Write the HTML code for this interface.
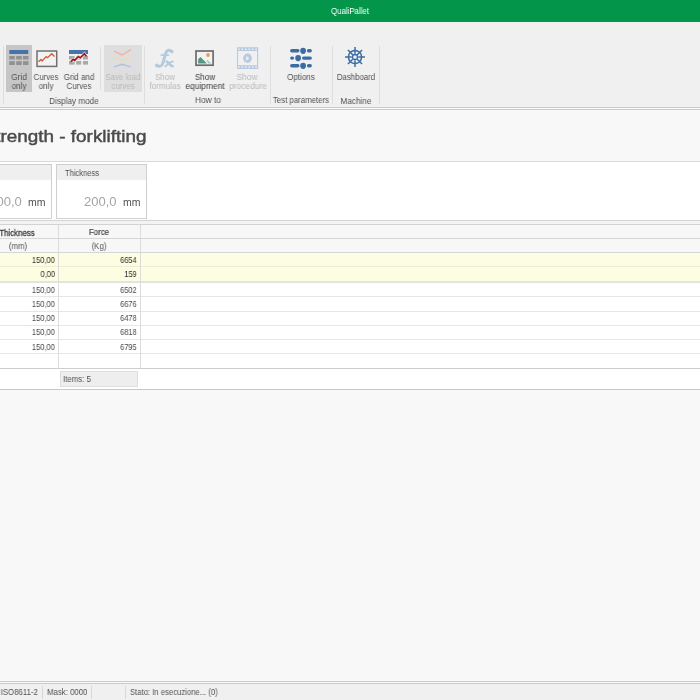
<!DOCTYPE html>
<html><head><meta charset="utf-8"><style>
html,body{margin:0;padding:0;width:700px;height:700px;overflow:hidden;background:#f7f7f7;}
body{position:relative;font-family:"Liberation Sans", sans-serif;}
body>div{position:absolute;will-change:transform;}
</style></head><body>
<div style="left:0px;top:0px;width:700px;height:22px;background:#03964b;"></div>
<div style="top:6.84px;font-size:8.8px;color:#ffffff;font-weight:400;line-height:9.830px;white-space:nowrap;left:150px;width:400px;text-align:center;transform:scaleX(0.89);transform-origin:center 50%;">QualiPallet</div>
<div style="left:0px;top:22px;width:700px;height:85px;background:#f0f0f0;"></div>
<div style="left:0px;top:107px;width:700px;height:1px;background:#c9c9c9;"></div>
<div style="left:0px;top:108px;width:700px;height:1px;background:#fbfbfb;"></div>
<div style="left:0px;top:109px;width:700px;height:1px;background:#c9c9c9;"></div>
<div style="left:3px;top:46px;width:1px;height:58px;background:#dedede;"></div>
<div style="left:144px;top:46px;width:1px;height:58px;background:#dedede;"></div>
<div style="left:270px;top:46px;width:1px;height:58px;background:#dedede;"></div>
<div style="left:332px;top:46px;width:1px;height:58px;background:#dedede;"></div>
<div style="left:379px;top:46px;width:1px;height:58px;background:#dedede;"></div>
<div style="left:100px;top:47px;width:1px;height:43px;background:#dedede;"></div>
<div style="left:6px;top:45px;width:26px;height:47px;background:#c6c6c6;"></div>
<svg style="position:absolute;left:6px;top:45px" width="26" height="30" viewBox="0 0 26 30"><rect x="3.3" y="5" width="19" height="4" fill="#4573aa"/><rect x="3.3" y="11" width="5.5" height="3.5" fill="#919191"/><rect x="10.2" y="11" width="5.5" height="3.5" fill="#919191"/><rect x="17" y="11" width="5.5" height="3.5" fill="#919191"/><rect x="3.3" y="16.2" width="5.5" height="3.8" fill="#919191"/><rect x="10.2" y="16.2" width="5.5" height="3.8" fill="#919191"/><rect x="17" y="16.2" width="5.5" height="3.8" fill="#919191"/></svg>
<div style="top:72.64px;font-size:8.8px;color:#505050;font-weight:400;line-height:9.830px;white-space:nowrap;left:-181px;width:400px;text-align:center;transform:scaleX(0.94);transform-origin:center 50%;">Grid</div>
<div style="top:82.04px;font-size:8.8px;color:#505050;font-weight:400;line-height:9.830px;white-space:nowrap;left:-181px;width:400px;text-align:center;transform:scaleX(0.92);transform-origin:center 50%;">only</div>
<svg style="position:absolute;left:30px;top:44px" width="32" height="26" viewBox="0 0 32 26"><rect x="7" y="7" width="19.7" height="15.4" fill="#f2f2f2" stroke="#707070" stroke-width="1.5"/><polyline points="8.5,17.8 11,15.5 12.1,16.9 16.2,12.6 17.6,13.7 21.7,9.8 24.5,12.6" fill="none" stroke="#d35a36" stroke-width="1.35"/></svg>
<div style="top:72.64px;font-size:8.8px;color:#505050;font-weight:400;line-height:9.830px;white-space:nowrap;left:-153.6px;width:400px;text-align:center;transform:scaleX(0.89);transform-origin:center 50%;">Curves</div>
<div style="top:82.04px;font-size:8.8px;color:#505050;font-weight:400;line-height:9.830px;white-space:nowrap;left:-153.6px;width:400px;text-align:center;transform:scaleX(0.92);transform-origin:center 50%;">only</div>
<svg style="position:absolute;left:64px;top:46px" width="30" height="24" viewBox="0 0 30 24"><rect x="5" y="4" width="19" height="4" fill="#4573aa"/><rect x="5" y="10" width="5.6" height="3.5" fill="#a9a9a9"/><rect x="12.2" y="10" width="5" height="3.5" fill="#a9a9a9"/><rect x="19" y="10" width="5" height="3.5" fill="#a9a9a9"/><rect x="5" y="15" width="5.6" height="3.6" fill="#a9a9a9"/><rect x="12.2" y="15" width="5" height="3.6" fill="#a9a9a9"/><rect x="19" y="15" width="5" height="3.6" fill="#a9a9a9"/><polyline points="6.9,15.9 9.2,13.3 10.7,14.4 14.4,10.5 16.3,11.8 20.4,7.7 22.5,10.5" fill="none" stroke="#e4e4e4" stroke-width="2.8"/><polyline points="6.9,15.9 9.2,13.3 10.7,14.4 14.4,10.5 16.3,11.8 20.4,7.7 22.5,10.5" fill="none" stroke="#9e1414" stroke-width="1.6"/></svg>
<div style="top:72.64px;font-size:8.8px;color:#505050;font-weight:400;line-height:9.830px;white-space:nowrap;left:-121.3px;width:400px;text-align:center;transform:scaleX(0.91);transform-origin:center 50%;">Grid and</div>
<div style="top:82.04px;font-size:8.8px;color:#505050;font-weight:400;line-height:9.830px;white-space:nowrap;left:-121.3px;width:400px;text-align:center;transform:scaleX(0.89);transform-origin:center 50%;">Curves</div>
<div style="top:96.64px;font-size:8.8px;color:#505050;font-weight:400;line-height:9.830px;white-space:nowrap;left:-125.8px;width:400px;text-align:center;transform:scaleX(0.93);transform-origin:center 50%;">Display mode</div>
<div style="left:104px;top:45px;width:38px;height:47px;background:#dedede;"></div>
<svg style="position:absolute;left:104px;top:42px" width="38" height="30" viewBox="0 0 38 30"><polyline points="10,9.1 18,12.9 27,7.6" fill="none" stroke="#efb4a4" stroke-width="1.3"/><polyline points="10,15.9 18,18.2 27,15.9" fill="none" stroke="#f4d6ad" stroke-width="1.3"/><polyline points="10,25 18,22.3 27,25" fill="none" stroke="#a9c0dc" stroke-width="1.3"/></svg>
<div style="top:72.84px;font-size:8.8px;color:#b9b9b9;font-weight:400;line-height:9.830px;white-space:nowrap;left:-77px;width:400px;text-align:center;transform:scaleX(0.89);transform-origin:center 50%;">Save load</div>
<div style="top:81.74px;font-size:8.8px;color:#b9b9b9;font-weight:400;line-height:9.830px;white-space:nowrap;left:-77px;width:400px;text-align:center;transform:scaleX(0.89);transform-origin:center 50%;">curves</div>
<svg style="position:absolute;left:148px;top:44px" width="32" height="28" viewBox="0 0 32 28"><g fill="none" stroke="#b5c9de" stroke-linecap="round"><path d="M23.6,7.4 C22,5.6 18.8,5.6 17.8,9 L14.6,19.8 C13.8,22.4 10.8,23 8.6,21.6" stroke-width="2.9"/><path d="M13.4,11.1 L20.2,11.1" stroke-width="1.9"/><path d="M17.4,22.4 C19.5,20.2 22.5,17.6 24.9,17.6" stroke-width="1.9"/><path d="M18.6,17.6 C20,18 21.5,21.5 24.6,22.3" stroke-width="2.6"/></g><circle cx="23.7" cy="7.6" r="1.8" fill="#b5c9de"/><circle cx="9" cy="21.4" r="1.8" fill="#b5c9de"/></svg>
<div style="top:72.84px;font-size:8.8px;color:#b9b9b9;font-weight:400;line-height:9.830px;white-space:nowrap;left:-35.30000000000001px;width:400px;text-align:center;transform:scaleX(0.91);transform-origin:center 50%;">Show</div>
<div style="top:82.44px;font-size:8.8px;color:#b9b9b9;font-weight:400;line-height:9.830px;white-space:nowrap;left:-35.19999999999999px;width:400px;text-align:center;transform:scaleX(0.93);transform-origin:center 50%;">formulas</div>
<svg style="position:absolute;left:194px;top:49px" width="22" height="19" viewBox="0 0 22 19"><rect x="2" y="2" width="17.1" height="14.2" fill="#f2f2f2" stroke="#6c6c6c" stroke-width="1.7"/><circle cx="14" cy="6" r="1.9" fill="#e0a25e"/><polygon points="4.1,10.3 6.5,7.9 12.9,14.6 4.1,14.6" fill="#5a9580"/><polygon points="12.3,11.6 13.4,11 17.5,14.6 14.4,14.6" fill="#a3c9ba"/></svg>
<div style="top:72.84px;font-size:8.8px;color:#3c3c3c;font-weight:400;line-height:9.830px;white-space:nowrap;left:4.5px;width:400px;text-align:center;transform:scaleX(0.92);transform-origin:center 50%;">Show</div>
<div style="top:82.44px;font-size:8.8px;color:#3c3c3c;font-weight:400;line-height:9.830px;white-space:nowrap;left:4.800000000000011px;width:400px;text-align:center;transform:scaleX(0.96);transform-origin:center 50%;">equipment</div>
<div style="top:96.44px;font-size:8.8px;color:#505050;font-weight:400;line-height:9.830px;white-space:nowrap;left:7.5px;width:400px;text-align:center;transform:scaleX(0.95);transform-origin:center 50%;">How to</div>
<svg style="position:absolute;left:236px;top:46px" width="24" height="25" viewBox="0 0 24 25"><rect x="1.5" y="1.9" width="20.1" height="20.5" fill="none" stroke="#b7cadf" stroke-width="1.1"/><rect x="1" y="1.4" width="21.1" height="3.6" fill="#b7cadf" rx="0.8"/><rect x="1" y="19.3" width="21.1" height="3.6" fill="#b7cadf" rx="0.8"/><rect x="2.20" y="2.5" width="1.5" height="1.5" fill="#f0f0f0"/><rect x="2.20" y="20.4" width="1.5" height="1.5" fill="#f0f0f0"/><rect x="5.62" y="2.5" width="1.5" height="1.5" fill="#f0f0f0"/><rect x="5.62" y="20.4" width="1.5" height="1.5" fill="#f0f0f0"/><rect x="9.04" y="2.5" width="1.5" height="1.5" fill="#f0f0f0"/><rect x="9.04" y="20.4" width="1.5" height="1.5" fill="#f0f0f0"/><rect x="12.46" y="2.5" width="1.5" height="1.5" fill="#f0f0f0"/><rect x="12.46" y="20.4" width="1.5" height="1.5" fill="#f0f0f0"/><rect x="15.88" y="2.5" width="1.5" height="1.5" fill="#f0f0f0"/><rect x="15.88" y="20.4" width="1.5" height="1.5" fill="#f0f0f0"/><rect x="19.30" y="2.5" width="1.5" height="1.5" fill="#f0f0f0"/><rect x="19.30" y="20.4" width="1.5" height="1.5" fill="#f0f0f0"/><ellipse cx="11.5" cy="12.2" rx="4.4" ry="4.7" fill="#b7cadf"/><polygon points="10.2,9.9 13.4,12.2 10.2,14.7" fill="#f0f0f0"/></svg>
<div style="top:72.84px;font-size:8.8px;color:#b9b9b9;font-weight:400;line-height:9.830px;white-space:nowrap;left:47.400000000000006px;width:400px;text-align:center;transform:scaleX(0.95);transform-origin:center 50%;">Show</div>
<div style="top:82.44px;font-size:8.8px;color:#b9b9b9;font-weight:400;line-height:9.830px;white-space:nowrap;left:47.599999999999994px;width:400px;text-align:center;transform:scaleX(0.96);transform-origin:center 50%;">procedure</div>
<svg style="position:absolute;left:286px;top:44px" width="30" height="26" viewBox="0 0 30 26"><g stroke="#3b6ca4" stroke-width="3.4" stroke-linecap="round"><line x1="5.8" y1="6.8" x2="11.8" y2="6.8"/><line x1="22.6" y1="6.8" x2="24.2" y2="6.8"/><line x1="5.8" y1="14.1" x2="6.4" y2="14.1"/><line x1="17.7" y1="14.1" x2="24.2" y2="14.1"/><line x1="5.8" y1="21.8" x2="11.8" y2="21.8"/><line x1="22.6" y1="21.8" x2="24.2" y2="21.8"/></g><g fill="#3b6ca4"><ellipse cx="17.1" cy="6.8" rx="2.9" ry="3.1"/><ellipse cx="12.1" cy="14.1" rx="2.9" ry="3.1"/><ellipse cx="17.1" cy="21.8" rx="2.9" ry="3.1"/></g></svg>
<div style="top:72.74px;font-size:8.8px;color:#505050;font-weight:400;line-height:9.830px;white-space:nowrap;left:101px;width:400px;text-align:center;transform:scaleX(0.91);transform-origin:center 50%;">Options</div>
<div style="top:96.34px;font-size:8.8px;color:#505050;font-weight:400;line-height:9.830px;white-space:nowrap;left:101px;width:400px;text-align:center;transform:scaleX(0.89);transform-origin:center 50%;">Test parameters</div>
<svg style="position:absolute;left:345px;top:47.4px" width="20" height="20" viewBox="0 0 20 20"><g stroke="#3d6ea5" stroke-width="1.5" fill="none"><circle cx="10" cy="10" r="6.6"/><circle cx="10" cy="10" r="2.5" stroke-width="1.3"/><line x1="13.20" y1="10.00" x2="20.00" y2="10.00"/><line x1="12.26" y1="12.26" x2="17.07" y2="17.07"/><line x1="10.00" y1="13.20" x2="10.00" y2="20.00"/><line x1="7.74" y1="12.26" x2="2.93" y2="17.07"/><line x1="6.80" y1="10.00" x2="0.00" y2="10.00"/><line x1="7.74" y1="7.74" x2="2.93" y2="2.93"/><line x1="10.00" y1="6.80" x2="10.00" y2="0.00"/><line x1="12.26" y1="7.74" x2="17.07" y2="2.93"/></g></svg>
<div style="top:72.64px;font-size:8.8px;color:#505050;font-weight:400;line-height:9.830px;white-space:nowrap;left:155.8px;width:400px;text-align:center;transform:scaleX(0.89);transform-origin:center 50%;">Dashboard</div>
<div style="top:96.64px;font-size:8.8px;color:#505050;font-weight:400;line-height:9.830px;white-space:nowrap;left:155.89999999999998px;width:400px;text-align:center;transform:scaleX(0.93);transform-origin:center 50%;">Machine</div>
<div style="left:0px;top:110px;width:700px;height:51px;background:#f8f8f8;"></div>
<div style="top:126.67px;font-size:16.5px;color:#4a4a4a;font-weight:400;line-height:18.430px;white-space:nowrap;right:553.7px;text-align:right;transform:scaleX(1.145);transform-origin:right 50%;-webkit-text-stroke:0.45px #4a4a4a;">Bending strength - forklifting</div>
<div style="left:0px;top:161px;width:700px;height:1px;background:#d9d9d9;"></div>
<div style="left:0px;top:162px;width:700px;height:59px;background:#ffffff;"></div>
<div style="left:-39px;top:164px;width:91px;height:55px;background:#ffffff;box-sizing:border-box;border:1px solid #cfcfcf;"></div>
<div style="left:-38px;top:165px;width:89px;height:15px;background:#efefef;"></div>
<div style="top:169.21px;font-size:8.5px;color:#505050;font-weight:400;line-height:9.495px;white-space:nowrap;left:-30.4px;transform:scaleX(0.89);transform-origin:left 50%;">Length</div>
<div style="top:194.63px;font-size:13px;color:#a4a4a4;font-weight:400;line-height:14.521px;white-space:nowrap;right:678.5px;text-align:right;">1200,0</div>
<div style="top:197.00px;font-size:10.5px;color:#505050;font-weight:400;line-height:11.729px;white-space:nowrap;right:654.5px;text-align:right;">mm</div>
<div style="left:56px;top:164px;width:91px;height:55px;background:#ffffff;box-sizing:border-box;border:1px solid #cfcfcf;"></div>
<div style="left:57px;top:165px;width:89px;height:15px;background:#efefef;"></div>
<div style="top:169.21px;font-size:8.5px;color:#505050;font-weight:400;line-height:9.495px;white-space:nowrap;left:64.6px;transform:scaleX(0.89);transform-origin:left 50%;">Thickness</div>
<div style="top:194.63px;font-size:13px;color:#a4a4a4;font-weight:400;line-height:14.521px;white-space:nowrap;right:583.5px;text-align:right;">200,0</div>
<div style="top:197.00px;font-size:10.5px;color:#505050;font-weight:400;line-height:11.729px;white-space:nowrap;right:559.5px;text-align:right;">mm</div>
<div style="left:0px;top:220px;width:700px;height:1px;background:#d3d3d3;"></div>
<div style="left:0px;top:221px;width:700px;height:3px;background:#f3f3f3;"></div>
<div style="left:0px;top:224px;width:700px;height:1px;background:#d3d3d3;"></div>
<div style="left:0px;top:225px;width:700px;height:27px;background:#f7f7f7;"></div>
<div style="left:0px;top:238px;width:700px;height:1px;background:#d6d6d6;"></div>
<div style="left:0px;top:252px;width:700px;height:1px;background:#d6d6d6;"></div>
<div style="left:0px;top:253px;width:700px;height:28px;background:#fdfde2;"></div>
<div style="left:0px;top:266px;width:700px;height:1px;background:#ececd8;"></div>
<div style="left:0px;top:281px;width:700px;height:2px;background:#e3e3e3;"></div>
<div style="left:0px;top:283px;width:700px;height:85px;background:#ffffff;"></div>
<div style="left:0px;top:296px;width:700px;height:1px;background:#e6e6e6;"></div>
<div style="left:0px;top:311px;width:700px;height:1px;background:#e6e6e6;"></div>
<div style="left:0px;top:325px;width:700px;height:1px;background:#e6e6e6;"></div>
<div style="left:0px;top:339px;width:700px;height:1px;background:#e6e6e6;"></div>
<div style="left:0px;top:353px;width:700px;height:1px;background:#e6e6e6;"></div>
<div style="left:0px;top:368px;width:700px;height:1px;background:#cdcdcd;"></div>
<div style="left:58px;top:225px;width:1px;height:143px;background:#dcdcdc;"></div>
<div style="left:140px;top:225px;width:1px;height:143px;background:#dcdcdc;"></div>
<div style="top:228.54px;font-size:8.8px;color:#3a3a3a;font-weight:400;line-height:9.830px;white-space:nowrap;right:665px;text-align:right;transform:scaleX(0.89);transform-origin:right 50%;-webkit-text-stroke:0.3px #3a3a3a;">Thickness</div>
<div style="top:228.04px;font-size:8.8px;color:#383838;font-weight:400;line-height:9.830px;white-space:nowrap;left:-101.2px;width:400px;text-align:center;transform:scaleX(0.89);transform-origin:center 50%;-webkit-text-stroke:0.15px #383838;">Force</div>
<div style="top:242.04px;font-size:8.8px;color:#505050;font-weight:400;line-height:9.830px;white-space:nowrap;left:-182.5px;width:400px;text-align:center;transform:scaleX(0.89);transform-origin:center 50%;">(mm)</div>
<div style="top:242.04px;font-size:8.8px;color:#505050;font-weight:400;line-height:9.830px;white-space:nowrap;left:-101px;width:400px;text-align:center;transform:scaleX(0.89);transform-origin:center 50%;">(Kg)</div>
<div style="top:256.14px;font-size:8.8px;color:#2e2e2e;font-weight:400;line-height:9.830px;white-space:nowrap;right:645px;text-align:right;transform:scaleX(0.855);transform-origin:right 50%;">150,00</div>
<div style="top:256.14px;font-size:8.8px;color:#2e2e2e;font-weight:400;line-height:9.830px;white-space:nowrap;right:563px;text-align:right;transform:scaleX(0.84);transform-origin:right 50%;">6654</div>
<div style="top:270.24px;font-size:8.8px;color:#2e2e2e;font-weight:400;line-height:9.830px;white-space:nowrap;right:645px;text-align:right;transform:scaleX(0.855);transform-origin:right 50%;">0,00</div>
<div style="top:270.24px;font-size:8.8px;color:#2e2e2e;font-weight:400;line-height:9.830px;white-space:nowrap;right:563px;text-align:right;transform:scaleX(0.84);transform-origin:right 50%;">159</div>
<div style="top:286.34px;font-size:8.8px;color:#484848;font-weight:400;line-height:9.830px;white-space:nowrap;right:645px;text-align:right;transform:scaleX(0.855);transform-origin:right 50%;">150,00</div>
<div style="top:286.34px;font-size:8.8px;color:#484848;font-weight:400;line-height:9.830px;white-space:nowrap;right:563px;text-align:right;transform:scaleX(0.84);transform-origin:right 50%;">6502</div>
<div style="top:299.64px;font-size:8.8px;color:#484848;font-weight:400;line-height:9.830px;white-space:nowrap;right:645px;text-align:right;transform:scaleX(0.855);transform-origin:right 50%;">150,00</div>
<div style="top:299.64px;font-size:8.8px;color:#484848;font-weight:400;line-height:9.830px;white-space:nowrap;right:563px;text-align:right;transform:scaleX(0.84);transform-origin:right 50%;">6676</div>
<div style="top:314.04px;font-size:8.8px;color:#484848;font-weight:400;line-height:9.830px;white-space:nowrap;right:645px;text-align:right;transform:scaleX(0.855);transform-origin:right 50%;">150,00</div>
<div style="top:314.04px;font-size:8.8px;color:#484848;font-weight:400;line-height:9.830px;white-space:nowrap;right:563px;text-align:right;transform:scaleX(0.84);transform-origin:right 50%;">6478</div>
<div style="top:328.34px;font-size:8.8px;color:#484848;font-weight:400;line-height:9.830px;white-space:nowrap;right:645px;text-align:right;transform:scaleX(0.855);transform-origin:right 50%;">150,00</div>
<div style="top:328.34px;font-size:8.8px;color:#484848;font-weight:400;line-height:9.830px;white-space:nowrap;right:563px;text-align:right;transform:scaleX(0.84);transform-origin:right 50%;">6818</div>
<div style="top:342.64px;font-size:8.8px;color:#484848;font-weight:400;line-height:9.830px;white-space:nowrap;right:645px;text-align:right;transform:scaleX(0.855);transform-origin:right 50%;">150,00</div>
<div style="top:342.64px;font-size:8.8px;color:#484848;font-weight:400;line-height:9.830px;white-space:nowrap;right:563px;text-align:right;transform:scaleX(0.84);transform-origin:right 50%;">6795</div>
<div style="left:0px;top:369px;width:700px;height:20px;background:#ffffff;"></div>
<div style="left:60px;top:371px;width:78px;height:16px;background:#eeeeee;box-sizing:border-box;border:1px solid #dedede;"></div>
<div style="top:374.74px;font-size:8.8px;color:#505050;font-weight:400;line-height:9.830px;white-space:nowrap;left:63px;transform:scaleX(0.89);transform-origin:left 50%;">Items: 5</div>
<div style="left:0px;top:389px;width:700px;height:1px;background:#c8c8c8;"></div>
<div style="left:0px;top:390px;width:700px;height:291px;background:#f8f8f8;"></div>
<div style="left:0px;top:681px;width:700px;height:1px;background:#c9c9c9;"></div>
<div style="left:0px;top:682px;width:700px;height:1px;background:#fbfbfb;"></div>
<div style="left:0px;top:683px;width:700px;height:1px;background:#c9c9c9;"></div>
<div style="left:0px;top:684px;width:700px;height:16px;background:#f0f0f0;"></div>
<div style="left:42px;top:686px;width:1px;height:13px;background:#d8d8d8;"></div>
<div style="left:91px;top:686px;width:1px;height:13px;background:#d8d8d8;"></div>
<div style="left:125px;top:686px;width:1px;height:13px;background:#d8d8d8;"></div>
<div style="top:688.34px;font-size:8.8px;color:#505050;font-weight:400;line-height:9.830px;white-space:nowrap;right:662.3px;text-align:right;transform:scaleX(0.89);transform-origin:right 50%;">ISO8611-2</div>
<div style="top:688.34px;font-size:8.8px;color:#505050;font-weight:400;line-height:9.830px;white-space:nowrap;left:46.7px;transform:scaleX(0.89);transform-origin:left 50%;">Mask: 0000</div>
<div style="top:688.34px;font-size:8.8px;color:#505050;font-weight:400;line-height:9.830px;white-space:nowrap;left:129.7px;transform:scaleX(0.875);transform-origin:left 50%;">Stato: In esecuzione... (0)</div>
</body></html>
